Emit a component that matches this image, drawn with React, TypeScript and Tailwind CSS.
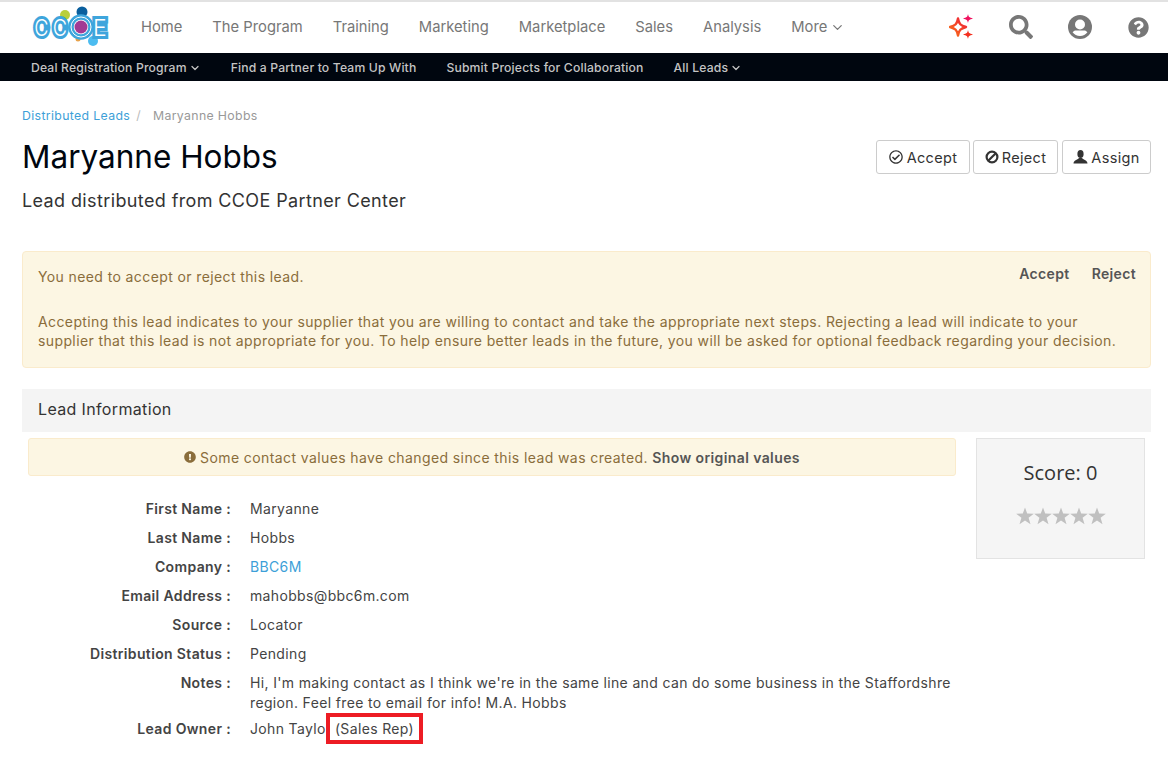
import { FaExclamationCircle, FaQuestionCircle, FaRegCheckCircle, FaSearch } from "react-icons/fa"
import { ChevronDown } from "lucide-react"

const navItems = ["Home", "The Program", "Training", "Marketing", "Marketplace", "Sales", "Analysis"]

const subItems = [
  { label: "Deal Registration Program", caret: true },
  { label: "Find a Partner to Team Up With", caret: false },
  { label: "Submit Projects for Collaboration", caret: false },
  { label: "All Leads", caret: true },
]

const fields = [
  { label: "First Name :", value: "Maryanne" },
  { label: "Last Name :", value: "Hobbs" },
  { label: "Company :", value: "BBC6M", link: true },
  { label: "Email Address :", value: "mahobbs@bbc6m.com" },
  { label: "Source :", value: "Locator" },
  { label: "Distribution Status :", value: "Pending" },
]

function Logo() {
  const blue = "#3ea5dc"
  return (
    <svg width="80" height="44" viewBox="0 0 80 44" className="shrink-0">
      <circle cx="34" cy="10" r="5" fill="#b9cf3a" />
      <circle cx="51" cy="7" r="5.5" fill="#0a5f9e" />
      <circle cx="62" cy="36" r="5" fill="#4cbcf0" />
      <circle cx="47" cy="34" r="2.5" fill="#e8a24a" />
      <g fontFamily="Inter, sans-serif" fontSize="23" fontWeight="300" textAnchor="middle" stroke={blue} strokeWidth="6" fill="#fff" paintOrder="stroke">
        <text transform="translate(10.5 30.7) scale(0.85 1)">C</text>
        <text transform="translate(29 30.7) scale(0.85 1)">C</text>
        <text transform="translate(69 30.7)">E</text>
      </g>
      <circle cx="50" cy="22" r="10" fill="#fff" stroke={blue} strokeWidth="5.5" />
      <circle cx="50" cy="22" r="10" fill="none" stroke="#fff" strokeWidth="1" />
      <circle cx="50" cy="22" r="6.5" fill="#a23a94" />
    </svg>
  )
}

function Sparkles() {
  return (
    <svg width="26" height="26" viewBox="0 0 26 26">
      <defs>
        <linearGradient id="spark" x1="0" y1="1" x2="1" y2="0">
          <stop offset="0" stopColor="#f97316" />
          <stop offset="1" stopColor="#ee1c3a" />
        </linearGradient>
      </defs>
      <path d="M9 4.5 C10 10 11.5 11.5 17 13 C11.5 14.5 10 16 9 21.5 C8 16 6.5 14.5 1 13 C6.5 11.5 8 10 9 4.5 Z" fill="none" stroke="url(#spark)" strokeWidth="2.4" strokeLinejoin="round" />
      <path d="M19 0 C19.6 2.9 20.1 3.4 24 4.5 C20.1 5.6 19.6 6.1 19 9 C18.4 6.1 17.9 5.6 14 4.5 C17.9 3.4 18.4 2.9 19 0 Z" fill="#f0125f" />
      <path d="M19 16 C19.6 18.9 20.1 19.4 24 20.5 C20.1 21.6 19.6 22.1 19 25 C18.4 22.1 17.9 21.6 14 20.5 C17.9 19.4 18.4 18.9 19 16 Z" fill="#f4301f" />
    </svg>
  )
}

function UserRing() {
  return (
    <svg width="24" height="24" viewBox="0 0 24 24" className="ml-[35px]">
      <circle cx="12" cy="12" r="12" fill="#777" />
      <circle cx="12" cy="9.5" r="5" fill="#fff" />
      <path d="M4.6 17.2 C6.5 14.6 9 15.6 12 15.6 C15 15.6 17.5 14.6 19.4 17.2 C17.8 19.6 15 21 12 21 C9 21 6.2 19.6 4.6 17.2 Z" fill="#fff" />
    </svg>
  )
}

function BanIcon() {
  return (
    <svg width="14" height="14" viewBox="0 0 14 14">
      <circle cx="7" cy="7" r="5.4" fill="none" stroke="currentColor" strokeWidth="2.2" />
      <path d="M3.2 10.8 L10.8 3.2" stroke="currentColor" strokeWidth="2.2" />
    </svg>
  )
}

function BustIcon() {
  return (
    <svg width="15" height="14" viewBox="0 0 15 14">
      <ellipse cx="7.5" cy="4" rx="3.1" ry="3.9" fill="currentColor" />
      <path d="M0.5 13.5 C0.8 10 4.2 10 6 8 L9 8 C10.8 10 14.2 10 14.5 13.5 Z" fill="currentColor" />
    </svg>
  )
}

function Star() {
  return (
    <svg width="18" height="18" viewBox="0 0 18 18" fill="#c0c0c0">
      <polygon points="9,0.5 11.2,6.6 17.8,6.8 12.6,10.8 14.5,17.2 9,13.4 3.5,17.2 5.4,10.8 0.2,6.8 6.8,6.6" />
    </svg>
  )
}

export default function App() {
  return (
    <div className="min-h-[757px] overflow-hidden bg-white font-['Inter',sans-serif] text-[14px] tracking-[0.35px] text-[#444]">
      <div className="h-[2px] bg-[#e2e2e2]" />

      <header className="flex h-[50px] items-center pl-[31px] pr-[19px]">
        <Logo />
        <nav className="ml-[30px] flex items-center gap-[30px] text-[14.75px] tracking-normal text-[#777]">
          {navItems.map((item) => (
            <a key={item} href="#" className="whitespace-nowrap">{item}</a>
          ))}
          <a href="#" className="flex items-center gap-[3px]">More <ChevronDown size={15} /></a>
        </nav>
        <div className="ml-auto flex items-center text-[#777]">
          <Sparkles />
          <FaSearch size={24} className="ml-[34px]" />
          <UserRing />
          <FaQuestionCircle size={21} className="ml-[36px]" />
        </div>
      </header>

      <div className="mt-px flex h-[28px] items-center gap-[30px] bg-[#00060f] pl-[31px] pt-[2px] text-[12.2px] font-medium tracking-[0.15px] text-[#c4c4c4]">
        {subItems.map((item) => (
          <a key={item.label} href="#" className="flex items-center gap-[2px] whitespace-nowrap">
            {item.label}
            {item.caret && <ChevronDown size={12} strokeWidth={2.5} />}
          </a>
        ))}
      </div>

      <main className="pl-[22px] pr-[17px]">
        <div className="mt-[26px] flex items-center text-[12.3px] text-[#999]">
          <a href="#" className="text-[#3d9fd8]">Distributed Leads</a>
          <span className="ml-[6px] mr-[12px] text-[#bbb]">/</span>
          <span>Maryanne Hobbs</span>
        </div>

        <div className="mt-[12px] flex items-start justify-between">
          <div>
            <h1 className="text-[31.5px] font-normal leading-[40px] tracking-normal text-[#00060f]">Maryanne Hobbs</h1>
            <p className="mt-[11px] text-[18px] leading-[26px] tracking-[0.38px] text-[#333]">Lead distributed from CCOE Partner Center</p>
          </div>
          <div className="mt-[3px] flex text-[14.5px] text-[#333]">
            <button className="mr-[3px] flex h-[34px] w-[94px] items-center justify-center gap-[4px] rounded-[3px] border border-[#ccc]"><FaRegCheckCircle size={14} /> Accept</button>
            <button className="mr-[4px] flex h-[34px] w-[85px] items-center justify-center gap-[3px] rounded-[3px] border border-[#ccc]"><BanIcon /> Reject</button>
            <button className="flex h-[34px] w-[89px] items-center justify-center gap-[3px] rounded-[3px] border border-[#ccc]"><BustIcon /> Assign</button>
          </div>
        </div>

        <section className="mt-[37px] rounded-[4px] border border-[#faebcc] bg-[#fcf6e3] px-[15px] pb-[17px] pt-[11px] tracking-[0.39px] text-[#8a6d3b]">
          <div className="flex items-start justify-between">
            <p className="mt-[4px] leading-[20px]">You need to accept or reject this lead.</p>
            <div className="-mr-px flex gap-[22px] font-semibold tracking-[0.35px] text-[#555]">
              <a href="#">Accept</a>
              <a href="#">Reject</a>
            </div>
          </div>
          <p className="mt-[25px] leading-[19px]">
            Accepting this lead indicates to your supplier that you are willing to contact and take the appropriate next steps. Rejecting a lead will indicate to your supplier that this lead is not appropriate for you. To help ensure better leads in the future, you will be asked for optional feedback regarding your decision.
          </p>
        </section>

        <h2 className="mt-[21px] flex h-[43px] items-center bg-[#f4f4f4] px-[16px] pb-[3px] text-[16px] font-normal text-[#333]">Lead Information</h2>

        <div className="mt-[6px] flex items-start">
          <div className="ml-[6px] w-[928px]">
            <div className="flex h-[38px] items-center justify-center gap-[4px] rounded-[3px] border border-[#faebcc] bg-[#fcf6e3] tracking-[0.4px] text-[#8a6d3b]">
              <FaExclamationCircle size={12} />
              <span>Some contact values have changed since this lead was created. <b className="font-semibold text-[#555]">Show original values</b></span>
            </div>

            <dl className="mt-[18px]">
              {fields.map((f) => (
                <div key={f.label} className="flex h-[29px] items-center">
                  <dt className="w-[203px] text-right font-semibold text-[#444]">{f.label}</dt>
                  <dd className={`ml-[19px] ${f.link ? "text-[#3d9fd8]" : ""}`}>{f.value}</dd>
                </div>
              ))}
              <div className="flex pt-[5px]">
                <dt className="w-[203px] text-right font-semibold leading-[20px] text-[#444]">Notes :</dt>
                <dd className="ml-[19px] w-[705px] leading-[20px]">Hi, I'm making contact as I think we're in the same line and can do some business in the Staffordshre region. Feel free to email for info! M.A. Hobbs</dd>
              </div>
              <div className="flex h-[31px] items-center">
                <dt className="w-[203px] text-right font-semibold text-[#444]">Lead Owner :</dt>
                <dd className="ml-[19px] flex items-center">
                  <span className="w-[76px]">John Taylo</span>
                  <span className="flex h-[31px] w-[97px] items-center justify-center border-4 border-[#ed1c24]">(Sales Rep)</span>
                </dd>
              </div>
            </dl>
          </div>

          <aside className="ml-[20px] flex h-[121px] w-[169px] flex-col items-center border border-[#e3e3e3] bg-[#f5f5f5] pt-[21px] font-['Open_Sans',sans-serif] tracking-normal">
            <div className="text-[20px] leading-[26px] text-[#333]">Score: 0</div>
            <div className="mt-[21px] flex">
              {[0, 1, 2, 3, 4].map((i) => (
                <Star key={i} />
              ))}
            </div>
          </aside>
        </div>
      </main>
    </div>
  )
}
